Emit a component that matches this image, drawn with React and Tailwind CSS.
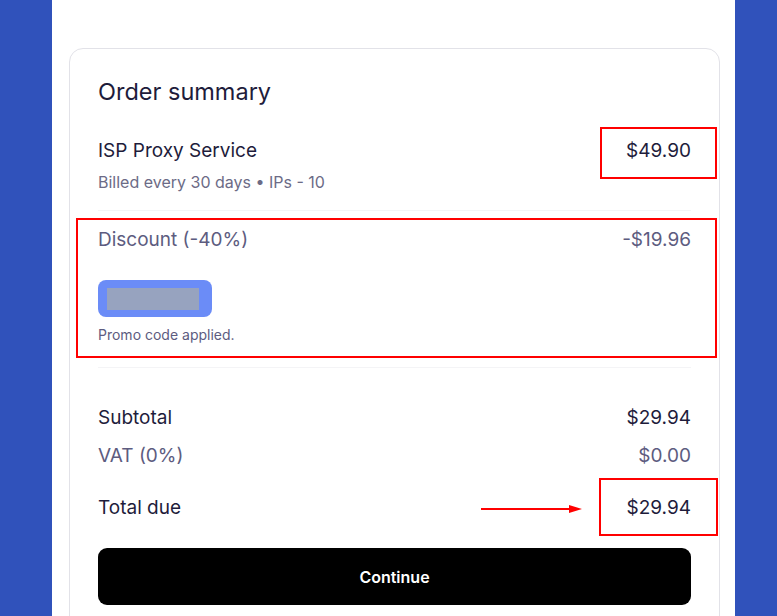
import React from 'react';

const Row = ({ label, value, muted, className = '' }) => (
  <div className={`flex items-center justify-between h-7 text-[19px] ${muted ? 'text-[#5d5c80]' : 'text-[#1e1c3b]'} ${className}`}>
    <span>{label}</span>
    <span>{value}</span>
  </div>
);

const App = () => {
  return (
    <div className="min-h-[616px] h-[616px] overflow-hidden bg-[#3052bb] flex" style={{ fontFamily: 'Inter, "Noto Sans", sans-serif' }}>
      <div className="ml-[52px] w-[683px] bg-white pt-[48px] pl-[17px] pr-[15px]">
        {/* Order card */}
        <div className="relative border border-[#e2e2e8] rounded-[14px] h-[600px] px-[28px] pt-[27px]">
          <h2 className="h-8 flex items-center text-[23.5px] text-[#1e1c3b]">Order summary</h2>

          {/* Product */}
          <Row label="ISP Proxy Service" value="$49.90" className="mt-[29px]" />
          <p className="mt-[6px] h-[22px] flex items-center text-[16px] text-[#6c6b86]">
            Billed every 30 days • IPs - 10
          </p>
          <div className="mt-[17px] h-px bg-[#f4f4f6]" />

          {/* Discount */}
          <Row label="Discount (-40%)" value="-$19.96" muted className="mt-[15px]" />
          <div className="mt-[26px] w-[114px] h-[37px] rounded-lg bg-[#6b8cf7] flex items-center px-[9px]">
            <div className="w-[92px] h-[22px] bg-[#97a3bf]" />
          </div>
          <p className="mt-[8px] h-[18px] flex items-center text-[14px] text-[#5d5c80]">Promo code applied.</p>
          <div className="mt-[24px] h-px bg-[#f4f4f6]" />

          {/* Totals */}
          <Row label="Subtotal" value="$29.94" className="mt-[36px]" />
          <Row label="VAT (0%)" value="$0.00" muted className="mt-[10px]" />
          <Row label="Total due" value="$29.94" className="mt-[24px]" />

          <button className="mt-[26px] w-full h-[57px] rounded-[9px] bg-black text-white text-[16px] font-semibold">
            Continue
          </button>

          {/* Annotations */}
          <div className="absolute left-[530px] top-[78px] w-[117px] h-[52px] border-2 border-[#ff0000]" />
          <div className="absolute left-[6px] top-[169px] w-[641px] h-[140px] border-2 border-[#ff0000]" />
          <div className="absolute left-[529px] top-[429px] w-[119px] h-[58px] border-2 border-[#ff0000]" />
          <svg className="absolute left-[411px] top-[454px]" width="102" height="12" viewBox="0 0 102 12">
            <line x1="0" y1="6" x2="90" y2="6" stroke="#ff0000" strokeWidth="2" />
            <polygon points="88,2 101,6 88,10" fill="#ff0000" />
          </svg>
        </div>
      </div>
    </div>
  );
};

export default App;
